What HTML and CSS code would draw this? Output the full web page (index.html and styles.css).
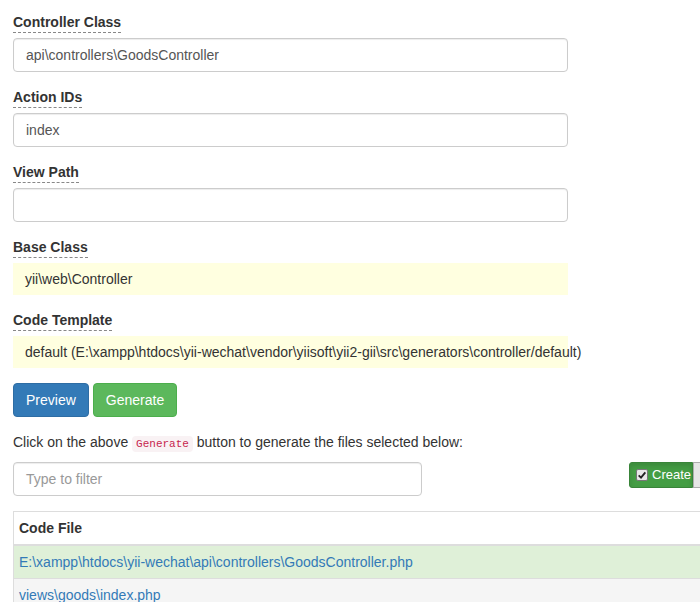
FILE: index.html
```html
<!DOCTYPE html>
<html>
<head>
<meta charset="utf-8">
<link rel="stylesheet" href="styles.css">
</head>
<body>
<div class="page">
  <div class="form-col">
    <div class="form-group">
      <label class="help">Controller Class</label>
      <div class="form-control">api\controllers\GoodsController</div>
    </div>
    <div class="form-group">
      <label class="help">Action IDs</label>
      <div class="form-control">index</div>
    </div>
    <div class="form-group">
      <label class="help">View Path</label>
      <div class="form-control"></div>
    </div>
    <div class="form-group">
      <label class="help">Base Class</label>
      <div class="sticky-value">yii\web\Controller</div>
    </div>
    <div class="form-group">
      <label class="help">Code Template</label>
      <div class="sticky-value">default (E:\xampp\htdocs\yii-wechat\vendor\yiisoft\yii2-gii\src\generators\controller/default)</div>
    </div>
    <div class="form-group buttons">
      <button class="btn btn-primary">Preview</button>
      <button class="btn btn-success">Generate</button>
    </div>
  </div>
  <p class="hint">Click on the above <code>Generate</code> button to generate the files selected below:</p>
  <div class="filter-row">
    <div class="form-control filter"><span class="placeholder">Type to filter</span></div>
    <div class="btn-group">
      <span class="btn-sm btn-create"><span class="cb"><svg viewBox="0 0 12 12" width="10" height="10"><path d="M2 6.5 L4.8 9.2 L10 2.8" fill="none" stroke="#222" stroke-width="2.2"/></svg></span>Create</span>
      <span class="btn-sm btn-default"><span class="cb light"></span>Unchanged</span>
    </div>
  </div>
  <table class="files">
    <thead>
      <tr><th>Code File</th></tr>
    </thead>
    <tbody>
      <tr class="success"><td><a>E:\xampp\htdocs\yii-wechat\api\controllers\GoodsController.php</a></td></tr>
      <tr class="plain"><td><a>views\goods\index.php</a></td></tr>
    </tbody>
  </table>
</div>
</body>
</html>
```
FILE: styles.css
```css
html, body {
  margin: 0;
  padding: 0;
  background: #fff;
  overflow: hidden;
}
body {
  font-family: "Liberation Sans", Arial, sans-serif;
  font-size: 14px;
  line-height: 20px;
  color: #333;
}
.page {
  width: 1100px;
  padding: 12px 0 0 13px;
}
.form-col {
  width: 555px;
}
.form-group {
  margin-bottom: 15px;
}
label.help {
  display: inline-block;
  font-weight: bold;
  line-height: 20px;
  border-bottom: 1px dashed #888;
  margin-bottom: 5px;
}
.form-group label.help + * {
  display: block;
}
.form-control {
  box-sizing: border-box;
  height: 34px;
  padding: 6px 12px;
  border: 1px solid #ccc;
  border-radius: 4px;
  box-shadow: inset 0 1px 1px rgba(0,0,0,.075);
  color: #555;
  background: #fff;
}
.sticky-value {
  height: 32px;
  box-sizing: border-box;
  padding: 6px 12px;
  background: #ffffe0;
  white-space: pre;
  color: #333;
}
.buttons {
  display: flex;
  gap: 4px;
}
.btn {
  font-family: inherit;
  font-size: 14px;
  line-height: 20px;
  padding: 6px 12px;
  border: 1px solid transparent;
  border-radius: 4px;
  color: #fff;
  height: 34px;
}
.btn-primary {
  background: #337ab7;
  border-color: #2e6da4;
}
.btn-success {
  background: #5cb85c;
  border-color: #4cae4c;
}
.hint {
  margin: 0 0 10px;
  height: 20px;
}
code {
  font-family: "Liberation Mono", "DejaVu Sans Mono", monospace;
  font-size: 11px;
  line-height: 14px;
  color: #c7254e;
  background: #f9f2f4;
  padding: 2px 4px;
  border-radius: 4px;
}
.filter-row {
  display: flex;
  align-items: flex-start;
  gap: 207px;
  margin-bottom: 15px;
}
.filter {
  width: 409px;
}
.placeholder {
  color: #999;
}
.btn-group {
  display: flex;
}
.btn-sm {
  display: flex;
  align-items: center;
  box-sizing: border-box;
  height: 26px;
  padding: 0 5px 0 6px;
  font-size: 13px;
  border: 1px solid;
}
.btn-create {
  width: 64px;
  background: #449d44;
  border-color: #398439;
  color: #fff;
  border-radius: 3px 0 0 3px;
  box-shadow: inset 0 3px 5px rgba(0,0,0,.125);
}
.btn-default {
  background: #e6e6e6;
  border-color: #adadad;
  color: #333;
}
.cb {
  flex: none;
  box-sizing: border-box;
  width: 12px;
  height: 12px;
  background: #e8e8e8;
  border: 1px solid #777;
  border-radius: 2px;
  display: flex;
  align-items: center;
  justify-content: center;
  margin-right: 4px;
}
.cb.light {
  background: #fff;
}
table.files {
  width: 1000px;
  border-collapse: collapse;
  border: 1px solid #ddd;
}
table.files th {
  text-align: left;
  padding: 6px 5px;
  border-bottom: 2px solid #ddd;
  font-weight: bold;
}
table.files td {
  padding: 6px 5px;
  border-top: 1px solid #ddd;
}
table.files a {
  color: #337ab7;
}
tr.success td {
  background: #dff0d8;
}
tr.plain td {
  background: #f5f5f5;
}
```
